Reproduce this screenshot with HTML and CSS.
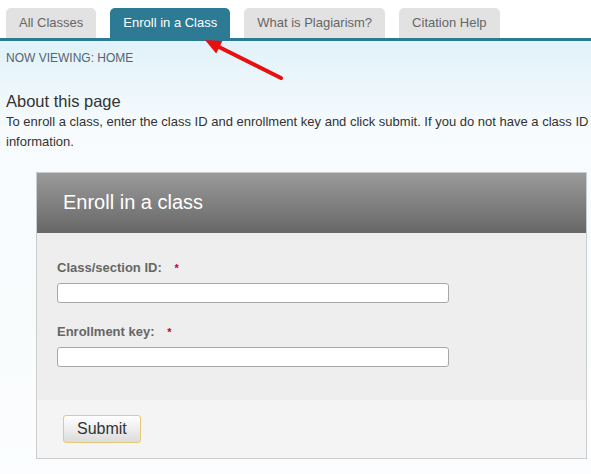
FILE: index.html
```
<!DOCTYPE html>
<html>
<head>
    <title>Enroll in a Class</title>
    <link rel="stylesheet" href="styles.css">
</head>
<body>
    <ul class="tabs">
        <li class="tab">All Classes</li>
        <li class="tab active">Enroll in a Class</li>
        <li class="tab">What is Plagiarism?</li>
        <li class="tab">Citation Help</li>
    </ul>

    <div class="content">
        <div class="breadcrumb">Now viewing: Home</div>

        <h2 class="page-title">About this page</h2>
        <p class="intro">
            <span class="intro-line">To enroll a class, enter the class ID and enrollment key and click submit. If you do not have a class ID</span><br>
            information.
        </p>

        <form class="panel">
            <div class="panel-head">Enroll in a class</div>
            <div class="panel-body">
                <label class="field-label" for="classId">Class/section ID: <span class="req">*</span></label>
                <input type="text" id="classId" class="field-input">

                <label class="field-label second" for="enrollKey">Enrollment key: <span class="req">*</span></label>
                <input type="text" id="enrollKey" class="field-input">
            </div>
            <div class="panel-foot">
                <button type="submit" class="submit-btn">Submit</button>
            </div>
        </form>
    </div>

    <!-- red arrow pointing at the active tab -->
    <svg class="arrow" width="591" height="100" viewBox="0 0 591 100">
        <line x1="217" y1="46" x2="281" y2="78" stroke="#e8100f" stroke-width="4" stroke-linecap="round"/>
        <polygon points="205,40 222.4,40.9 216.2,53.5" fill="#e8100f"/>
    </svg>
</body>
</html>
```

FILE: styles.css
```
body {
  margin: 0;
  font-family: "Liberation Sans", Arial, sans-serif;
  background-color: #fff;
  overflow: hidden;
}
.tabs {
  display: flex;
  gap: 14px;
  list-style: none;
  margin: 0;
  padding: 8px 0 0 6px;
  border-bottom: 3px solid #2c7a93;
}
.tab {
  height: 30px;
  line-height: 30px;
  padding: 0 13px;
  font-size: 13px;
  color: #666;
  background-color: #e2e2e2;
  border-radius: 5px 5px 0 0;
}
.tab.active {
  background-color: #2c7a93;
  color: #fff;
}
.content {
  padding: 0 0 17px 6px;
  background: linear-gradient(#e1f2fa, #f7fbfd 90px, #fbfdfe);
}
.breadcrumb {
  padding-top: 10px;
  font-size: 12px;
  line-height: 14px;
  color: #566370;
  text-transform: uppercase;
}
.page-title {
  margin: 26px 0 0;
  font-size: 16.5px;
  font-weight: normal;
  line-height: 20px;
  color: #333;
}
.intro {
  margin: 1px 0 0;
  overflow: hidden;
  font-size: 13px;
  line-height: 20px;
  color: #333;
}
.intro-line {
  white-space: nowrap;
}
.panel {
  width: 549px;
  margin: 20px 0 0 30px;
  border: 1px solid #ccc;
}
.panel-head {
  height: 60px;
  line-height: 58px;
  padding-left: 26px;
  font-size: 20px;
  color: #fff;
  background: linear-gradient(#9a9a9a, #676767);
}
.panel-body {
  padding: 27px 0 33px 20px;
  background-color: #eee;
}
.field-label {
  display: block;
  font-size: 13px;
  font-weight: bold;
  line-height: 15px;
  color: #666;
}
.field-label.second {
  margin-top: 21px;
}
.req {
  margin-left: 9px;
  color: #c4002b;
  font-size: 11px;
}
.field-input {
  display: block;
  box-sizing: border-box;
  width: 392px;
  height: 20px;
  margin-top: 7px;
  border: 1px solid #a8a8a8;
  border-radius: 3px;
  background-color: #fff;
}
.panel-foot {
  padding: 15px 0 15px 26px;
  background-color: #f4f4f4;
}
.submit-btn {
  height: 28px;
  padding: 0 13px;
  font-family: "Liberation Sans", Arial, sans-serif;
  font-size: 16px;
  color: #333;
  background: linear-gradient(#fff, #dcdcdc);
  border: 1px solid #e6c979;
  border-radius: 3px;
}
.arrow {
  position: absolute;
  top: 0;
  left: 0;
}
```
